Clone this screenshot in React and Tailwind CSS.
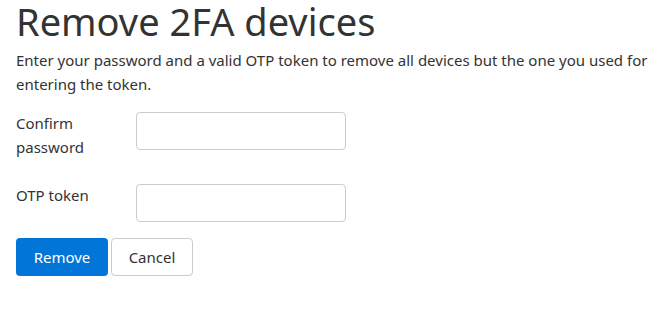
export default function App() {
  return (
    <div className="px-4 text-[#333] bg-white min-h-[316px]" style={{ fontFamily: '"Noto Sans", sans-serif' }}>
      <h1 className="text-[38px] leading-[43px] font-normal mb-[5px]">Remove 2FA devices</h1>
      <p className="text-[15px] leading-6 mb-4">
        Enter your password and a valid OTP token to remove all devices but the one you used for entering the token.
      </p>
      <form>
        <div className="flex mb-[25px]">
          <label className="w-[120px] text-[15px] leading-6 -mt-px">Confirm<br />password</label>
          <input type="password" className="w-[210px] h-[38px] border border-[#ccc] rounded-[4px]" />
        </div>
        <div className="flex mb-4">
          <label className="w-[120px] text-[15px] leading-6 -mt-px">OTP token</label>
          <input type="text" className="w-[210px] h-[38px] border border-[#ccc] rounded-[4px]" />
        </div>
        <div className="flex gap-[3px]">
          <button type="button" className="w-[92px] h-[38px] bg-[#0275d8] text-white rounded-[4px] text-[15px]">Remove</button>
          <button type="button" className="w-[82px] h-[38px] bg-white border border-[#ccc] rounded-[4px] text-[15px] text-[#333]">Cancel</button>
        </div>
      </form>
    </div>
  );
}
